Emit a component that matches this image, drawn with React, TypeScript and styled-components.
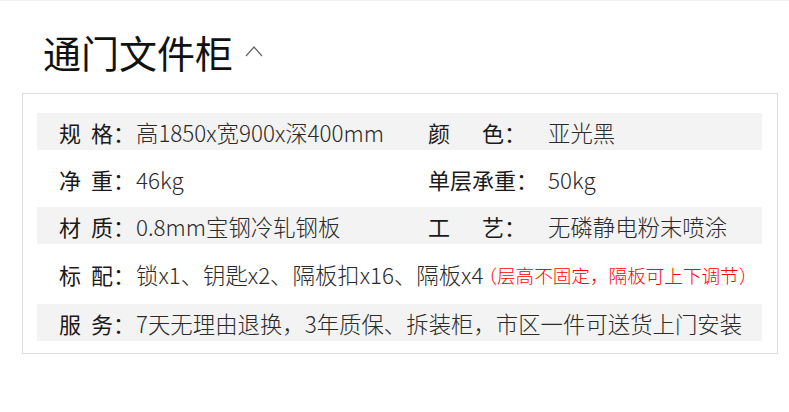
import styled, { createGlobalStyle } from 'styled-components';

const GlobalStyle = createGlobalStyle`
  html, body {
    margin: 0;
    padding: 0;
    background: #fff;
  }
  body {
    font-family: "Noto Sans CJK SC", "Noto Sans", sans-serif;
  }
`;

const Page = styled.div`
  width: 789px;
  height: 412px;
  box-sizing: border-box;
  border-top: 1px solid #f0f0f0;
  background: #fff;
`;

const Header = styled.div`
  display: flex;
  align-items: center;
  gap: 12px;
  height: 92px;
  padding: 9px 0 0 43px;
  box-sizing: border-box;
`;

const Title = styled.h1`
  margin: 0;
  font-size: 38px;
  line-height: 1;
  font-weight: 400;
  color: #111;
`;

const Caret = styled.svg`
  width: 18px;
  height: 12px;
  margin-top: -2px;
`;

const Box = styled.div`
  margin-left: 22px;
  width: 756px;
  box-sizing: border-box;
  border: 1px solid #dcdcdc;
  padding: 19px 15px 12px 14px;
  display: flex;
  flex-direction: column;
  gap: 10px;
`;

const Row = styled.div<{ $striped?: boolean; $tall?: boolean }>`
  display: flex;
  align-items: center;
  height: ${(p) => (p.$tall ? 40 : 37)}px;
  padding-left: 22px;
  background: ${(p) => (p.$striped ? '#f3f3f3' : 'transparent')};
  font-size: 22px;
  color: #222;
  white-space: nowrap;
`;

const Half = styled.div<{ $w?: number }>`
  display: flex;
  align-items: center;
  width: ${(p) => (p.$w ? `${p.$w}px` : 'auto')};
  flex: ${(p) => (p.$w ? 'none' : '1')};
`;

const Label = styled.div<{ $w: number; $gap: number }>`
  display: flex;
  width: ${(p) => p.$w}px;
  flex: none;
  gap: ${(p) => p.$gap}px;
  font-weight: 400;
  color: #1a1a1a;
`;

const Value = styled.span`
  font-size: 22.4px;
  font-weight: 300;
  color: #2a2a2a;
`;

const Note = styled.span`
  font-size: 18.6px;
  font-weight: 300;
  color: #ff0000;
  margin-left: -5px;
`;

type Spec = { a: string; b: string; gap: number; w: number; value: string };

const pairs: [Spec, Spec][] = [
  [
    { a: '规', b: '格：', gap: 10, w: 77, value: '高1850x宽900x深400mm' },
    { a: '颜', b: '色：', gap: 32, w: 120, value: '亚光黑' },
  ],
  [
    { a: '净', b: '重：', gap: 10, w: 77, value: '46kg' },
    { a: '单层承', b: '重：', gap: 0, w: 120, value: '50kg' },
  ],
  [
    { a: '材', b: '质：', gap: 10, w: 77, value: '0.8mm宝钢冷轧钢板' },
    { a: '工', b: '艺：', gap: 32, w: 120, value: '无磷静电粉末喷涂' },
  ],
];

function Cell({ spec }: { spec: Spec }) {
  return (
    <>
      <Label $w={spec.w} $gap={spec.gap}>
        <span>{spec.a}</span>
        <span>{spec.b}</span>
      </Label>
      <Value>{spec.value}</Value>
    </>
  );
}

export default function App() {
  return (
    <Page>
      <GlobalStyle />
      <Header>
        <Title>通门文件柜</Title>
        <Caret viewBox="0 0 18 12">
          <path d="M1 11 L9 2 L17 11" fill="none" stroke="#666" strokeWidth="1.2" />
        </Caret>
      </Header>
      <Box>
        {pairs.map(([l, r], i) => (
          <Row key={i} $striped={i % 2 === 0}>
            <Half $w={369}>
              <Cell spec={l} />
            </Half>
            <Half>
              <Cell spec={r} />
            </Half>
          </Row>
        ))}
        <Row $tall>
          <Label $w={77} $gap={10}>
            <span>标</span>
            <span>配：</span>
          </Label>
          <Value>锁x1、钥匙x2、隔板扣x16、隔板x4</Value>
          <Note>（层高不固定，隔板可上下调节）</Note>
        </Row>
        <Row $striped>
          <Label $w={77} $gap={10}>
            <span>服</span>
            <span>务：</span>
          </Label>
          <Value>7天无理由退换，3年质保、拆装柜，市区一件可送货上门安装</Value>
        </Row>
      </Box>
    </Page>
  );
}
